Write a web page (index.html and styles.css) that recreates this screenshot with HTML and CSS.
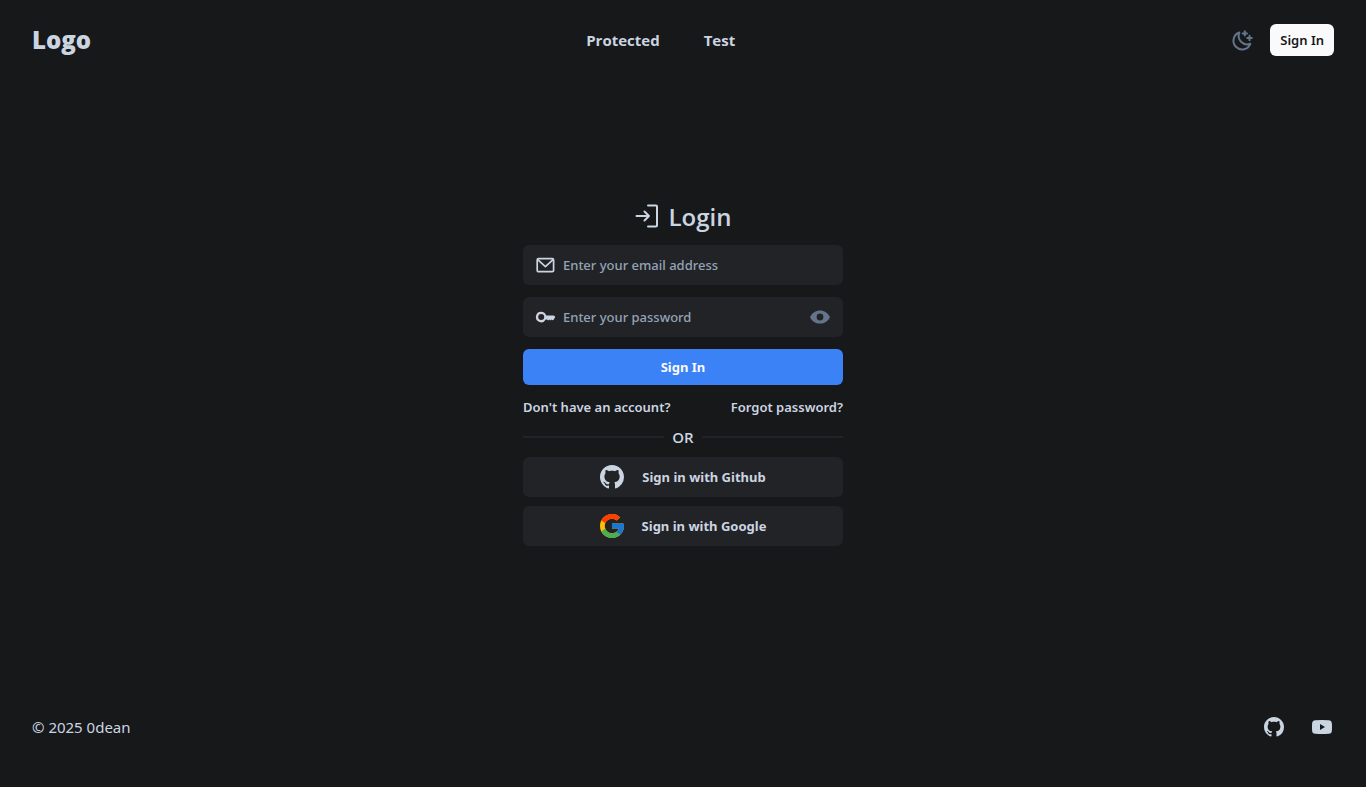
FILE: index.html
```html
<!DOCTYPE html>
<html lang="en">
<head>
<meta charset="utf-8">
<meta name="viewport" content="width=device-width, initial-scale=1">
<title>Login</title>
<link rel="stylesheet" href="styles.css">
</head>
<body>
<svg class="sprite" aria-hidden="true">
  <symbol id="github" viewBox="0 0 16 16"><path fill="currentColor" d="M8 0C3.58 0 0 3.58 0 8c0 3.54 2.29 6.53 5.47 7.59.4.07.55-.17.55-.38 0-.19-.01-.82-.01-1.49-2.01.37-2.53-.49-2.69-.94-.09-.23-.48-.94-.82-1.13-.28-.15-.68-.52-.01-.53.63-.01 1.08.58 1.23.82.72 1.21 1.87.87 2.33.66.07-.52.28-.87.51-1.07-1.78-.2-3.64-.89-3.64-3.95 0-.87.31-1.59.82-2.15-.08-.2-.36-1.02.08-2.12 0 0 .67-.21 2.2.82.64-.18 1.32-.27 2-.27s1.36.09 2 .27c1.53-1.04 2.2-.82 2.2-.82.44 1.1.16 1.92.08 2.12.51.56.82 1.27.82 2.15 0 3.07-1.87 3.75-3.65 3.95.29.25.54.73.54 1.48 0 1.07-.01 1.93-.01 2.2 0 .21.15.46.55.38A8.01 8.01 0 0 0 16 8c0-4.42-3.58-8-8-8z"/></symbol>
</svg>
<header class="header">
  <a class="logo" href="#">Logo</a>
  <nav class="nav">
    <a href="#">Protected</a>
    <a href="#">Test</a>
  </nav>
  <div class="actions">
    <button class="icon-button theme" type="button" aria-label="Toggle theme">
      <svg width="24" height="24" viewBox="0 0 24 24" fill="none" stroke="currentColor" stroke-width="2" stroke-linecap="round" stroke-linejoin="round"><path d="M9.300 4.500a8.700 8.700 0 1 0 11 11.300A8.600 8.600 0 0 1 9.300 4.500z"/><path d="M14.800 3.200v4.400M12.600 5.400h4.400M19.500 7.700v4.600M17.200 10h4.600"/></svg>
    </button>
    <button class="header-sign-in" type="button">Sign In</button>
  </div>
</header>
<main class="main">
  <form class="login">
    <h1 class="title">
      <svg width="24" height="24" viewBox="0 0 24 24" fill="none" stroke="currentColor" stroke-width="2" stroke-linecap="round" stroke-linejoin="round" aria-hidden="true"><path d="M13 1.500h8a1 1 0 0 1 1 1v19a1 1 0 0 1-1 1h-8M1.500 12h12.500M9.500 7.500l4.500 4.500-4.500 4.500"/></svg>
      <span>Login</span>
    </h1>
    <label class="field">
      <svg width="20" height="20" viewBox="0 0 20 20" fill="none" stroke="currentColor" stroke-width="1.700" stroke-linecap="round" stroke-linejoin="round" role="img" aria-label="Email"><rect x="2.200" y="3.700" width="16.400" height="13" rx="1.300"/><path d="M3 4.800 10.400 11.700l7.400-6.900"/></svg>
      <input type="email" placeholder="Enter your email address">
    </label>
    <div class="field">
      <label class="field-icon" for="password" aria-label="Password">
        <svg width="20" height="20" viewBox="0 0 20 20" aria-hidden="true"><path fill="currentColor" fill-rule="evenodd" d="M6.200 4.700a5.300 5.300 0 1 0 4.600 7.900h1.300l.9.900 1.200-.9 1.100.9 1.300-.9.900.6.900-.2L20 10.600v-1L18.700 8.400h-7.600A5.300 5.300 0 0 0 6.200 4.700zm0 2.300a3 3 0 1 1 0 6 3 3 0 0 1 0-6z"/></svg>
      </label>
      <input id="password" type="password" placeholder="Enter your password">
      <button class="icon-button eye" type="button" aria-label="Show password">
        <svg width="20" height="20" viewBox="0 0 20 20"><path fill="currentColor" fill-rule="evenodd" d="M10 3.400c-4.300 0-7.700 2.600-9.600 5.800a1.600 1.600 0 0 0 0 1.700c1.900 3.200 5.300 5.700 9.600 5.700s7.700-2.500 9.600-5.700a1.600 1.600 0 0 0 0-1.700C17.700 6 14.300 3.400 10 3.400zM10 6.600a3.400 3.400 0 1 1 0 6.800 3.400 3.400 0 0 1 0-6.800z"/></svg>
      </button>
    </div>
    <button class="submit" type="submit">Sign In</button>
    <div class="links">
      <a href="#">Don't have an account?</a>
      <a href="#">Forgot password?</a>
    </div>
    <div class="divider">OR</div>
    <div class="providers">
      <button class="provider" type="button">
        <svg width="24" height="24" aria-hidden="true"><use href="#github"/></svg>
        <span>Sign in with Github</span>
      </button>
      <button class="provider" type="button">
        <svg width="24" height="24" viewBox="4 4 40 40" aria-hidden="true"><path fill="#FFC107" d="M43.611 20.083H42V20H24v8h11.303c-1.649 4.657-6.080 8-11.303 8-6.627 0-12-5.373-12-12s5.373-12 12-12c3.059 0 5.842 1.154 7.961 3.039l5.657-5.657C34.046 6.053 29.268 4 24 4 12.955 4 4 12.955 4 24s8.955 20 20 20 20-8.955 20-20c0-1.341-.138-2.650-.389-3.917z"/><path fill="#FF3D00" d="m6.306 14.691 6.571 4.819C14.655 15.108 18.961 12 24 12c3.059 0 5.842 1.154 7.961 3.039l5.657-5.657C34.046 6.053 29.268 4 24 4 16.318 4 9.656 8.337 6.306 14.691z"/><path fill="#4CAF50" d="M24 44c5.166 0 9.860-1.977 13.409-5.192l-6.190-5.238C29.211 35.091 26.715 36 24 36c-5.202 0-9.619-3.317-11.283-7.946l-6.522 5.025C9.505 39.556 16.227 44 24 44z"/><path fill="#1976D2" d="M43.611 20.083H42V20H24v8h11.303c-.792 2.237-2.231 4.166-4.087 5.571l.003-.002 6.190 5.238C36.971 39.205 44 34 44 24c0-1.341-.138-2.650-.389-3.917z"/></svg>
        <span>Sign in with Google</span>
      </button>
    </div>
  </form>
</main>
<footer class="footer">
  <span>© 2025 0dean</span>
  <div class="social">
    <a href="#" aria-label="GitHub"><svg width="20" height="20"><use href="#github"/></svg></a>
    <a href="#" aria-label="YouTube"><svg width="20" height="20" viewBox="0 0 20 20"><path fill="currentColor" fill-rule="evenodd" d="M3.500 3.200Q10 2.700 16.500 3.200C19 3.400 19.700 4.300 19.900 6.500q.2 3.500 0 7c-.2 2.200-.9 3.100-3.400 3.300q-6.500.5-13 0C1 16.600.3 15.700.1 13.500q-.2-3.500 0-7C.3 4.300 1 3.400 3.500 3.200zM8 7v6l5-3z"/></svg></a>
  </div>
</footer>
</body>
</html>
```
FILE: styles.css
```css
* { box-sizing: border-box; }

body {
  margin: 0;
  min-height: 100vh;
  display: flex;
  flex-direction: column;
  background: #17181a;
  color: #cbd5e1;
  font-family: "Open Sans", "Noto Sans", sans-serif;
  font-size: 15px;
  line-height: 24px;
}

a { color: inherit; text-decoration: none; }
svg { display: block; flex: none; }
.sprite { position: absolute; width: 0; height: 0; }

button, input {
  margin: 0;
  padding: 0;
  border: 0;
  background: none;
  color: inherit;
  font-family: "Noto Sans", sans-serif;
  font-size: 13px;
  line-height: 20px;
}
button { cursor: pointer; }

.header, .footer {
  display: flex;
  align-items: center;
  justify-content: space-between;
  padding: 0 32px;
}
.header { height: 80px; }
.footer { height: 120px; font-family: "Noto Sans", sans-serif; }

.logo { font-size: 24px; font-weight: 800; line-height: 32px; }
.nav { display: flex; gap: 44px; font-weight: 700; }
.actions { display: flex; align-items: center; gap: 16px; }
.icon-button { color: #64748b; }
.header-sign-in {
  height: 32px;
  padding: 0 10px;
  border-radius: 6px;
  background: #fafafa;
  color: #17181a;
  font-weight: 600;
}

.main {
  flex: 1;
  display: flex;
  align-items: center;
  justify-content: center;
}
.login {
  width: 100%;
  max-width: 320px;
  display: flex;
  flex-direction: column;
  gap: 12px;
}
.title {
  display: flex;
  justify-content: center;
  gap: 10px;
  margin: 0;
  font-size: 24px;
  font-weight: 600;
  line-height: 32px;
}
.title svg { margin-top: 3px; }

.field {
  display: flex;
  align-items: center;
  gap: 8px;
  height: 40px;
  padding: 0 13px 0 12px;
  border-radius: 6px;
  background: #222326;
}
.field input { flex: 1; min-width: 0; outline: none; font-weight: 500; }
.field input::placeholder { color: #94a3b8; opacity: 1; }

.submit {
  height: 36px;
  border-radius: 6px;
  background: #3b82f6;
  color: #fafafa;
  font-weight: 700;
}
.links {
  display: flex;
  justify-content: space-between;
  font-family: "Noto Sans", sans-serif;
  font-size: 13px;
  font-weight: 600;
  line-height: 20px;
}
.divider {
  display: flex;
  align-items: center;
  gap: 8px;
  margin: -4px 0;
  font-weight: 600;
}
.divider::before, .divider::after {
  content: "";
  flex: 1;
  height: 2px;
  background: #222326;
}
.providers { display: flex; flex-direction: column; gap: 9px; }
.provider {
  display: flex;
  align-items: center;
  justify-content: center;
  gap: 18px;
  height: 40px;
  border-radius: 6px;
  background: #222326;
  font-weight: 700;
}

.social { display: flex; gap: 28px; padding-right: 2px; }
```
